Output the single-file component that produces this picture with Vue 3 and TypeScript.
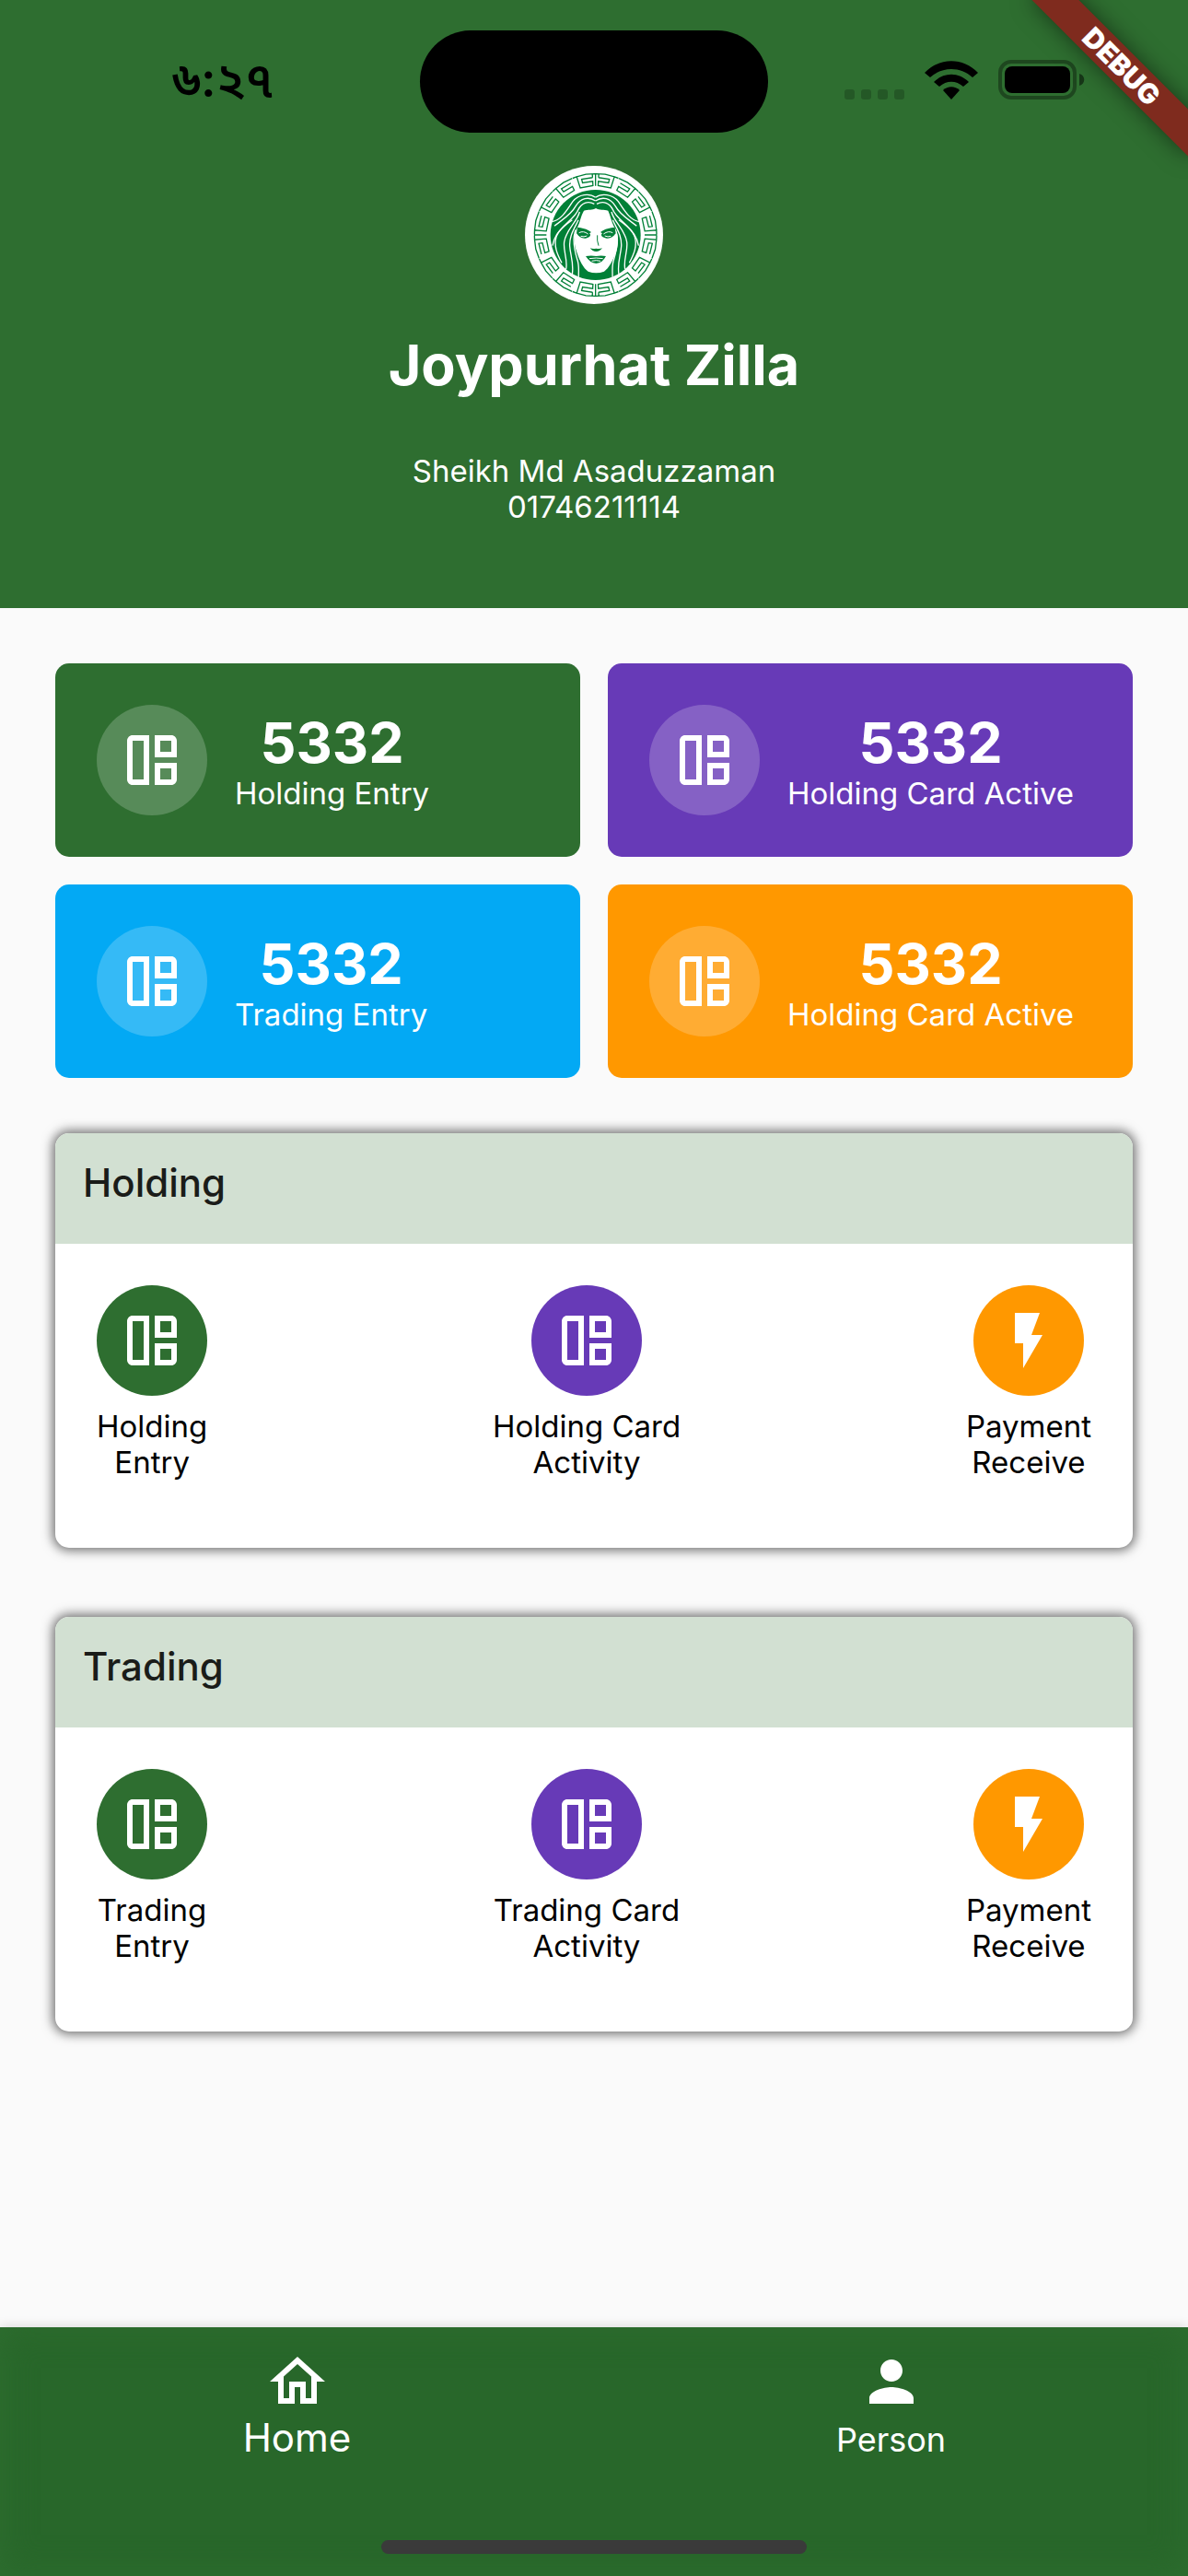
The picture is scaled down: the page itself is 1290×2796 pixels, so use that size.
<script setup lang="ts">
interface Stat {
  value: string
  label: string
  tone: string
}

interface Action {
  lines: string[]
  tone: string
  icon: string
}

interface Section {
  title: string
  actions: Action[]
}

const dashboardIcon =
  'M5 3h6v18H5c-1.1 0-2-.9-2-2V5c0-1.1.9-2 2-2zM5 5v14h4V5zM13 3h6c1.1 0 2 .9 2 2v6h-8zM15 5v4h4V5zM13 13h8v6c0 1.1-.9 2-2 2h-6zM15 15v4h4v-4z'
const flashIcon = 'M7 2v11h3v9l7-12h-4l3-8z'
const homeIcon =
  'M12 5.69l5 4.5V18h-2v-6H9v6H7v-7.81l5-4.5M12 3L2 12h3v8h6v-6h2v6h6v-8h3L12 3z'
const personIcon =
  'M12 12c2.21 0 4-1.79 4-4s-1.79-4-4-4-4 1.79-4 4 1.79 4 4 4zm0 2c-2.67 0-8 1.34-8 4v2h16v-2c0-2.66-5.33-4-8-4z'

const stats: Stat[] = [
  { value: '5332', label: 'Holding Entry', tone: 'green' },
  { value: '5332', label: 'Holding Card Active', tone: 'purple' },
  { value: '5332', label: 'Trading Entry', tone: 'blue' },
  { value: '5332', label: 'Holding Card Active', tone: 'orange' },
]

function actionsFor(kind: string): Action[] {
  return [
    { lines: [kind, 'Entry'], tone: 'green', icon: dashboardIcon },
    { lines: [`${kind} Card`, 'Activity'], tone: 'purple', icon: dashboardIcon },
    { lines: ['Payment', 'Receive'], tone: 'orange', icon: flashIcon },
  ]
}

const sections: Section[] = [
  { title: 'Holding', actions: actionsFor('Holding') },
  { title: 'Trading', actions: actionsFor('Trading') },
]

function polar(angle: number, radius: number): string {
  const a = ((angle - 90) * Math.PI) / 180
  return `${(260 + radius * Math.cos(a)).toFixed(1)} ${(255 + radius * Math.sin(a)).toFixed(1)}`
}

// Meander border of the emblem: one spiral key as [degrees, radius] points,
// repeated four times in each quadrant and mirrored about the vertical axis.
const key: [number, number][] = [
  [3, 187],
  [14, 187],
  [14, 175],
  [3, 175],
  [3, 161],
  [18, 161],
  [18, 199],
  [22, 199],
]

function meander(): string {
  let d = ''
  for (const start of [0, 180]) {
    for (let i = 0; i < 4; i++) {
      for (const side of [1, -1]) {
        const at = (a: number, r: number) => polar(start + side * (a + i * 22.5), r)
        d += 'M' + key.map(([a, r]) => at(a, r)).join('L')
        d += 'M' + at(0, 199) + 'L' + at(9, 200) + 'L' + at(18, 199)
        if (i === 0) d += 'M' + at(3, 187) + 'L' + at(3, 198)
      }
    }
    d += 'M' + polar(start, 200) + 'L' + polar(start, 160)
    d += 'M' + polar(start + 90, 200) + 'L' + polar(start + 90, 160)
  }
  return d
}

const ring = meander()

// Left half of the hair, mirrored for the right half.
const strands = [
  'M260 133C240 118 205 122 186 146C168 172 150 206 118 212',
  'M260 144C236 128 212 136 196 160C180 190 150 206 126 226',
  'M256 154C234 142 214 152 204 172C192 206 146 222 132 262C124 290 134 316 150 346',
  'M208 180C200 214 164 236 158 278C154 308 170 334 164 366',
  'M204 206C192 234 174 256 176 292C178 322 190 346 184 384',
  'M196 238C184 262 190 300 200 334C208 356 204 376 205 392',
  'M184 206C154 228 126 250 120 290',
]
</script>

<template>
  <div class="page">
    <header class="hero">
      <div class="status">
        <time class="clock">৬:২৭</time>
        <div class="island"></div>
        <div class="indicators">
          <svg width="65" height="11" viewBox="0 0 65 11" fill="#000" fill-opacity=".2">
            <rect v-for="n in 4" :key="n" :x="(n - 1) * 18" y="0" width="11" height="11" rx="3" />
          </svg>
          <svg width="58" height="42" viewBox="0 0 58 42">
            <path d="M0 13C16-4 42-4 58 13L52 18C39 6 19 6 6 18z" />
            <path d="M10 23C21 12 37 12 48 23L42 28C34 21 24 21 16 28z" />
            <path d="M20 32C25 27 33 27 38 32L29 42z" />
          </svg>
          <svg width="94" height="43" viewBox="0 0 94 43">
            <rect x="2" y="2" width="81" height="39" rx="12" fill="none" stroke="#000" stroke-opacity=".35" stroke-width="4" />
            <rect x="7" y="7" width="71" height="29" rx="8" />
            <path d="M88 15c7 2 7 11 0 13z" fill-opacity=".5" />
          </svg>
        </div>
      </div>

      <svg class="emblem" viewBox="30 30 450 450" aria-hidden="true">
        <circle cx="255" cy="255" r="225" fill="#fff" />
        <path :d="ring" fill="none" stroke="#008037" stroke-width="4" />
        <circle cx="260" cy="255" r="147" fill="#008037" />
        <g v-for="side in ['', 'translate(520 0) scale(-1 1)']" :key="side" :transform="side" fill="none" stroke="#fff" stroke-width="4">
          <path v-for="strand in strands" :key="strand" :d="strand" />
        </g>
        <path fill="#fff" d="M222 176C235 171 250 176 261 168C272 176 288 171 301 176C308 190 312 212 320 228C336 246 336 282 328 308C316 340 304 362 288 374Q262 384 236 374C220 362 208 340 198 308C188 280 188 250 202 228C210 212 212 192 222 176z" />
        <g fill="#008037">
          <path d="M201 230C214 232 232 234 246 246L240 250C248 256 240 264 228 266C214 268 204 258 198 250z" />
          <path d="M323 230C308 232 290 234 276 246L282 250C274 256 282 264 296 266C310 268 320 258 326 250z" />
          <path d="M242 298Q252 302 262 299Q272 302 282 298Q274 309 262 309Q250 309 242 298z" />
          <path d="M228 324Q246 321 262 324Q278 321 294 324Q282 347 262 348Q242 347 228 324z" />
        </g>
        <path d="M266 256Q264 274 270 290" fill="none" stroke="#008037" stroke-width="3" />
        <path d="M206 248Q220 240 236 252M316 248Q302 240 286 252M212 259Q222 263 232 258M310 259Q300 263 290 258M240 332Q262 328 284 332M248 340Q262 336 276 340" fill="none" stroke="#fff" stroke-width="3" />
      </svg>

      <h1>Joypurhat Zilla</h1>
      <p class="owner">Sheikh Md Asaduzzaman<br />01746211114</p>

      <div class="ribbon">DEBUG</div>
    </header>

    <main>
      <div class="stats">
        <article v-for="(stat, i) in stats" :key="i" class="stat" :class="stat.tone">
          <span class="disc faint">
            <svg viewBox="0 0 24 24"><path fill-rule="evenodd" :d="dashboardIcon" /></svg>
          </span>
          <div class="figures">
            <strong>{{ stat.value }}</strong>
            <span>{{ stat.label }}</span>
          </div>
        </article>
      </div>

      <section v-for="section in sections" :key="section.title" class="panel">
        <h2>{{ section.title }}</h2>
        <div class="actions">
          <button v-for="action in section.actions" :key="action.lines[0]" type="button" class="action">
            <span class="disc" :class="action.tone">
              <svg viewBox="0 0 24 24"><path fill-rule="evenodd" :d="action.icon" /></svg>
            </span>
            <span v-for="line in action.lines" :key="line">{{ line }}</span>
          </button>
        </div>
      </section>
    </main>

    <nav class="tabs">
      <a href="#home" class="tab current">
        <svg viewBox="0 0 24 24"><path :d="homeIcon" /></svg>
        Home
      </a>
      <a href="#person" class="tab">
        <svg viewBox="0 0 24 24"><path :d="personIcon" /></svg>
        Person
      </a>
      <div class="grabber"></div>
    </nav>
  </div>
</template>

<style>
body {
  margin: 0;
  background: #fafafa;
}
</style>

<style scoped>
.page {
  display: flex;
  flex-direction: column;
  min-height: 100vh;
  background: #fafafa;
  font-family: Inter, "Noto Sans", "Noto Sans Bengali", sans-serif;
  font-size: 33px;
  line-height: 39px;
  color: #000;
}

.green { background: #2e6e30; }
.purple { background: #673ab7; }
.blue { background: #03a9f4; }
.orange { background: #ff9800; }

.hero {
  position: relative;
  overflow: hidden;
  display: flex;
  flex-direction: column;
  align-items: center;
  padding: 33px 0 90px;
  background: #2e6e30;
  color: #fff;
  text-align: center;
}

.status {
  display: grid;
  grid-template-columns: 1fr 378px 1fr;
  align-items: center;
  align-self: stretch;
  color: #000;
}

.clock {
  padding: 0 0 3px 28px;
  font-size: 52px;
  font-weight: 600;
  line-height: 60px;
}

.island {
  height: 111px;
  border-radius: 56px;
  background: #000;
}

.indicators {
  display: flex;
  align-items: flex-end;
  justify-content: flex-end;
  gap: 22px;
  padding: 0 112px 4px 0;
}

.emblem {
  width: 150px;
  height: 150px;
  margin-top: 36px;
}

h1 {
  margin: 30px 0 0;
  font-size: 61px;
  font-weight: 700;
  line-height: 72px;
}

.owner {
  margin: 60px 0 0;
}

.ribbon {
  position: absolute;
  top: 54px;
  right: -48px;
  width: 240px;
  height: 36px;
  transform: rotate(45deg);
  background: #7f2b1e;
  box-shadow: 0 0 24px rgba(0, 0, 0, 0.5);
  color: #fff;
  font-size: 30px;
  font-weight: 900;
  line-height: 36px;
}

main {
  flex: 1;
  padding: 60px;
}

.stats {
  display: grid;
  grid-template-columns: 1fr 1fr;
  gap: 30px;
}

.stat {
  display: flex;
  align-items: center;
  gap: 30px;
  padding: 45px;
  border-radius: 15px;
  color: #fff;
}

.disc {
  display: grid;
  place-items: center;
  flex: none;
  width: 120px;
  height: 120px;
  border-radius: 50%;
}

.faint {
  background: rgba(255, 255, 255, 0.2);
}

.disc svg,
.tab svg {
  width: 72px;
  height: 72px;
  fill: #fff;
}

.figures {
  display: flex;
  flex-direction: column;
  align-items: center;
  white-space: nowrap;
}

.figures strong {
  font-size: 61px;
  line-height: 72px;
}

.panel {
  margin-top: 60px;
  border-radius: 15px;
  background: #fff;
  box-shadow: 0 0 12px 3px rgba(0, 0, 0, 0.55);
}

.panel + .panel {
  margin-top: 75px;
}

h2 {
  margin: 0;
  padding: 29px 30px 41px;
  border-radius: 15px 15px 0 0;
  background: #d2e0d2;
  color: #1a1c19;
  font-size: 42px;
  font-weight: 500;
  line-height: 50px;
}

.actions {
  display: flex;
  justify-content: space-between;
  align-items: flex-start;
  padding: 45px 45px 73px;
}

.action {
  display: flex;
  flex-direction: column;
  align-items: center;
  padding: 0;
  border: 0;
  background: none;
  color: inherit;
  font: inherit;
}

.action .disc {
  margin-bottom: 14px;
}

.tabs {
  position: relative;
  display: flex;
  height: 247px;
  padding-top: 23px;
  background: #28672a;
  box-shadow: 0 0 12px rgba(0, 0, 0, 0.16), inset 0 0 36px #2e6e30;
}

.tab {
  flex: 1;
  display: flex;
  flex-direction: column;
  align-items: center;
  color: #fff;
  font-size: 36px;
  line-height: 54px;
  text-decoration: none;
}

.current {
  font-size: 42px;
  line-height: 50px;
}

.grabber {
  position: absolute;
  bottom: 24px;
  left: 50%;
  width: 462px;
  height: 15px;
  border-radius: 8px;
  background: #3a3a3a;
  transform: translateX(-50%);
}
</style>
